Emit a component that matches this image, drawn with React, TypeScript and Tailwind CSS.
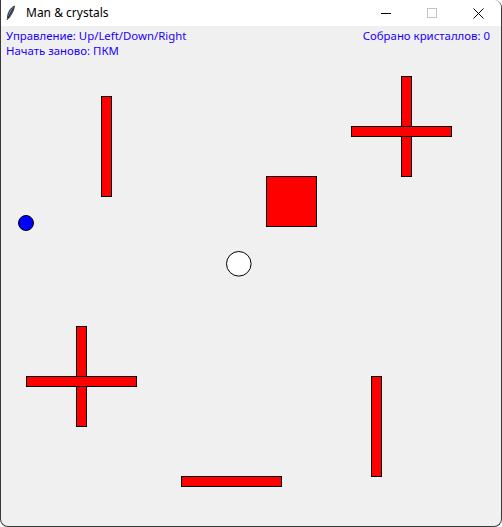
export default function App() {
  const bars = [
    { x: 101, y: 96, w: 10, h: 100 },
    { x: 401, y: 76, w: 10, h: 100 },
    { x: 351, y: 126, w: 100, h: 10 },
    { x: 266, y: 176, w: 50, h: 50 },
    { x: 76, y: 326, w: 10, h: 100 },
    { x: 26, y: 376, w: 110, h: 10 },
    { x: 371, y: 376, w: 10, h: 100 },
    { x: 181, y: 476, w: 100, h: 10 },
  ]

  return (
    <div className="w-[502px] h-[527px] bg-white">
      <div className="w-full h-full flex flex-col border-l border-r border-b border-[#3a3a3a] rounded-b-[8px] rounded-tr-[8px] overflow-hidden bg-[#f0f0f0]">
        {/* title bar */}
        <div className="h-[26px] shrink-0 bg-white flex items-center font-['Segoe_UI','Noto_Sans',sans-serif] text-[12px] text-black">
          <svg width="10" height="16" viewBox="0 0 10 16" className="ml-[5px] mr-[10px]">
            <path d="M8.5 1 C4 3 1.5 8 1.5 13 L3 13 C5 10 8 6 8.5 1 Z" fill="#5a7fa8" stroke="#1a1a1a" strokeWidth="0.8" />
            <path d="M7.5 3 L1 15" stroke="#1a1a1a" strokeWidth="0.9" />
          </svg>
          <span>Man &amp; crystals</span>
          <div className="ml-auto flex items-center">
            <div className="w-[46px] h-[26px] flex items-center justify-center">
              <svg width="10" height="10" viewBox="0 0 10 10">
                <line x1="0" y1="5.5" x2="10" y2="5.5" stroke="#000" strokeWidth="1" />
              </svg>
            </div>
            <div className="w-[46px] h-[26px] flex items-center justify-center">
              <svg width="10" height="10" viewBox="0 0 10 10">
                <rect x="0.5" y="0.5" width="9" height="9" fill="none" stroke="#c4c4c4" strokeWidth="1" />
              </svg>
            </div>
            <div className="w-[46px] h-[26px] flex items-center justify-center">
              <svg width="11" height="11" viewBox="0 0 11 11">
                <path d="M0.5 0.5 L10.5 10.5 M10.5 0.5 L0.5 10.5" stroke="#000" strokeWidth="1" />
              </svg>
            </div>
          </div>
        </div>

        {/* canvas */}
        <div className="relative flex-1">
          <svg className="absolute inset-0" width="500" height="500" viewBox="1 26 500 500">
            {bars.map((b, i) => (
              <rect key={i} x={b.x + 0.5} y={b.y + 0.5} width={b.w} height={b.h} fill="#ff0000" stroke="#000" strokeWidth="1" />
            ))}
            <circle cx="26" cy="223" r="7.5" fill="#0000ff" stroke="#000" strokeWidth="1" />
            <circle cx="238.8" cy="263.8" r="12.3" fill="#ffffff" stroke="#000" strokeWidth="1" />
          </svg>
          <div className="relative flex justify-between pl-[5px] pr-[11px] pt-[2px] text-[11.4px] leading-[15px] text-[#1a00ff] font-['Segoe_UI','Noto_Sans',sans-serif]">
            <div className="flex flex-col">
              <span>Управление: Up/Left/Down/Right</span>
              <span>Начать заново: ПКМ</span>
            </div>
            <span>Собрано кристаллов: 0</span>
          </div>
        </div>
      </div>
    </div>
  )
}
